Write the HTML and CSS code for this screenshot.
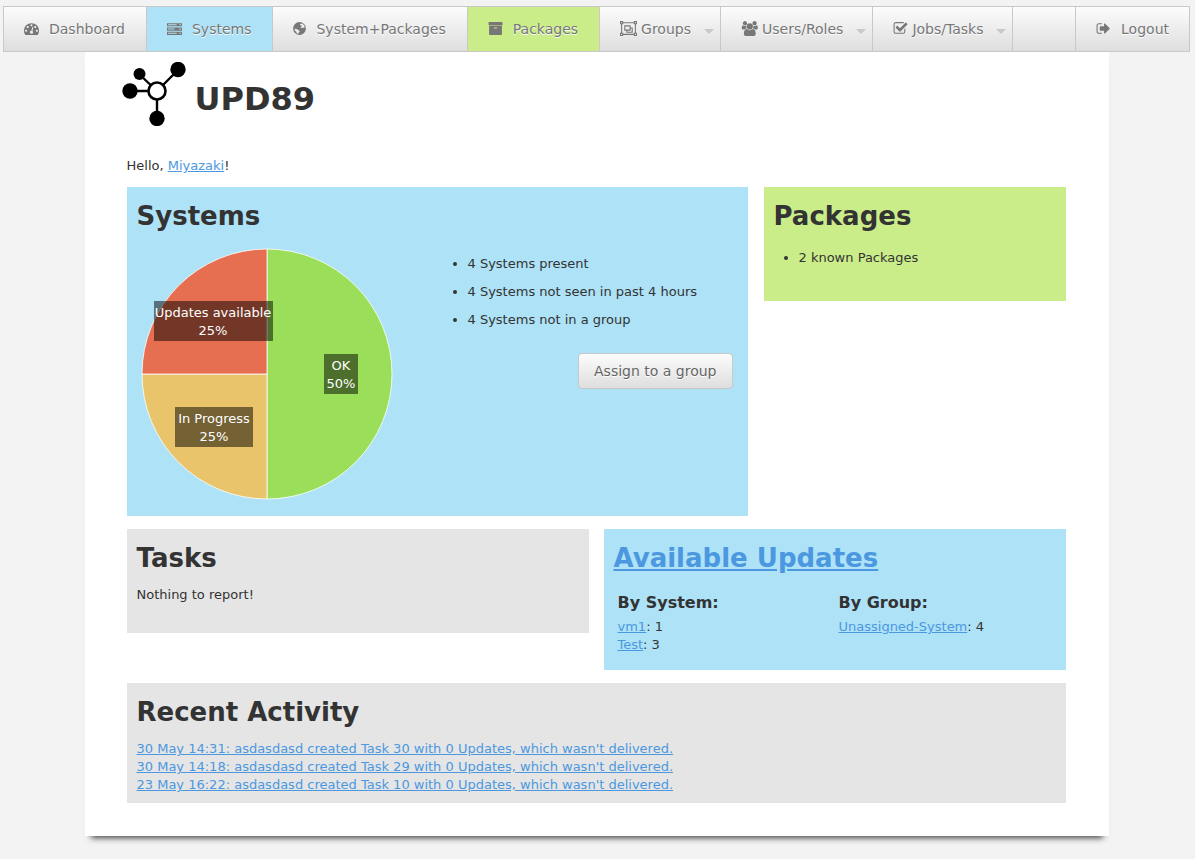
FILE: index.html
```html
<!DOCTYPE html>
<html lang="en">
<head>
<meta charset="utf-8">
<title>UPD89</title>
<link rel="stylesheet" href="styles.css">
</head>
<body>
<nav class="nav">
  <a class="nav-item" href="#"><svg class="icon" viewBox="0 0 1792 1792"><path d="M384 1152q0-53-37.5-90.5t-90.5-37.5-90.5 37.5-37.5 90.5 37.5 90.5 90.5 37.5 90.5-37.5 37.5-90.5zm192-448q0-53-37.5-90.5t-90.5-37.5-90.5 37.5-37.5 90.5 37.5 90.5 90.5 37.5 90.5-37.5 37.5-90.5zm428 481l101-382q6-26-7.5-48.5t-38.5-29.5-48 6.5-30 39.5l-101 382q-60 5-107 43.5t-63 98.5q-20 77 20 146t117 89 146-20 89-117q16-60-6-117t-72-91zm660-33q0-53-37.5-90.5t-90.5-37.5-90.5 37.5-37.5 90.5 37.5 90.5 90.5 37.5 90.5-37.5 37.5-90.5zm-640-640q0-53-37.5-90.5t-90.5-37.5-90.5 37.5-37.5 90.5 37.5 90.5 90.5 37.5 90.5-37.5 37.5-90.5zm448 192q0-53-37.5-90.5t-90.5-37.5-90.5 37.5-37.5 90.5 37.5 90.5 90.5 37.5 90.5-37.5 37.5-90.5zm320 448q0 261-141 483-19 29-54 29h-1402q-35 0-54-29-141-221-141-483 0-182 71-348t191-286 286-191 348-71 348 71 286 191 191 286 71 348z"/></svg>Dashboard</a>
  <a class="nav-item nav-item-systems" href="#"><svg class="icon" viewBox="0 0 1792 1792"><path fill-rule="evenodd" d="M0 256h1792v384H0zM128 384v128h1024V384zM1472 384v128h192V384zM0 768h1792v384H0zM128 896v128h768V896zM1472 896v128h192V896zM0 1280h1792v384H0zM128 1408v128h1024v-128zM1472 1408v128h192v-128z"/></svg>Systems</a>
  <a class="nav-item" href="#"><svg class="icon icon-narrow" viewBox="128 0 1536 1792"><path fill-rule="evenodd" d="M896 128a768 768 0 1 0 0 1536 768 768 0 1 0 0-1536zM1090 290l190 80 150 150 90 190-80 130-150-50-110 90-130-60 20-140 120-60-80-110-120 20-30-110zM330 900l130 60 200 20 110 130 140 60-20 150-120 110-30 130-160-60-60-180-130-130-80-150z"/></svg>System+Packages</a>
  <a class="nav-item nav-item-packages" href="#"><svg class="icon" viewBox="0 0 1792 1792"><path d="M1088 832q0-26-19-45t-45-19h-256q-26 0-45 19t-19 45 19 45 45 19h256q26 0 45-19t19-45zm576-192v960q0 26-19 45t-45 19h-1408q-26 0-45-19t-19-45v-960q0-26 19-45t45-19h1408q26 0 45 19t19 45zm64-448v256q0 26-19 45t-45 19h-1536q-26 0-45-19t-19-45v-256q0-26 19-45t45-19h1536q26 0 45 19t19 45z"/></svg>Packages</a>
  <a class="nav-item nav-item-menu" href="#"><svg class="icon icon-wide" viewBox="0 0 2048 1792"><path fill-rule="evenodd" d="M0 0h384v128h1280V0h384v384h-128v1024h128v384h-384v-128H384v128H0v-384h128V384H0zM128 128v128h128V128zM1792 128v128h128V128zM384 256v128H256v1024h128v128h1280v-128h128V384h-128V256zM128 1536v128h128v-128zM1792 1536v128h128v-128zM512 512h768v256h256v640H768v-256H512zM640 640v384h512V640zM1280 896v256H896v128h512V896z"/></svg>Groups</a>
  <a class="nav-item nav-item-menu" href="#"><svg class="icon icon-wide" viewBox="0 0 1984 1792"><path d="M657 896q-162 5-265 128h-134q-82 0-138-40.5t-56-118.5q0-353 124-353 6 0 43.5 21t97.5 42.5 119 21.5q67 0 133-23-5 37-5 66 0 139 81 256zm1071 637q0 120-73 189.5t-194 69.5h-874q-121 0-194-69.5t-73-189.5q0-53 3.5-103.5t14-109 26.5-108.5 43-97.5 62-81 85.5-53.5 111.5-20q10 0 43 21.5t73 48 107 48 135 21.5 135-21.5 107-48 73-48 43-21.5q61 0 111.5 20t85.5 53.5 62 81 43 97.5 26.5 108.5 14 109 3.5 103.5zm-1024-1277q0 106-75 181t-181 75-181-75-75-181 75-181 181-75 181 75 75 181zm704 384q0 159-112.5 271.5t-271.5 112.5-271.5-112.5-112.5-271.5 112.5-271.5 271.5-112.5 271.5 112.5 112.5 271.5zm576 225q0 78-56 118.5t-138 40.5h-134q-103-123-265-128 81-117 81-256 0-29-5-66 66 23 133 23 59 0 119-21.5t97.5-42.5 43.5-21q124 0 124 353zm-128-609q0 106-75 181t-181 75-181-75-75-181 75-181 181-75 181 75 75 181z"/></svg>Users/Roles</a>
  <a class="nav-item nav-item-menu" href="#"><svg class="icon" viewBox="0 0 1792 1792"><path d="M1472 930v318q0 119-84.5 203.5t-203.5 84.5h-832q-119 0-203.5-84.5t-84.5-203.5v-832q0-119 84.5-203.5t203.5-84.5h832q63 0 117 25 15 7 18 23 3 17-9 29l-49 49q-10 10-23 10-3 0-9-2-23-6-45-6h-832q-66 0-113 47t-47 113v832q0 66 47 113t113 47h832q66 0 113-47t47-113v-254q0-13 9-22l64-64q10-10 23-10 6 0 12 3 20 8 20 29zm231-489l-814 814q-24 24-57 24t-57-24l-430-430q-24-24-24-57t24-57l110-110q24-24 57-24t57 24l263 263 647-647q24-24 57-24t57 24l110 110q24 24 24 57t-24 57z"/></svg>Jobs/Tasks</a>
  <span class="nav-space"></span>
  <a class="nav-item" href="#"><svg class="icon" viewBox="0 0 1792 1792"><path d="M704 1440q0 4 1 20t.5 26.5-3 23.5-10 19.5-20.5 6.5h-320q-119 0-203.5-84.5t-84.5-203.5v-704q0-119 84.5-203.5t203.5-84.5h320q13 0 22.5 9.5t9.5 22.5q0 4 1 20t.5 26.5-3 23.5-10 19.5-20.5 6.5h-320q-66 0-113 47t-47 113v704q0 66 47 113t113 47h312l11.5 1 11.5 3 8 5.5 7 9 2 13.5zm928-544q0 26-19 45l-544 544q-19 19-45 19t-45-19-19-45v-288h-448q-26 0-45-19t-19-45v-384q0-26 19-45t45-19h448v-288q0-26 19-45t45-19 45 19l544 544q19 19 19 45z"/></svg>Logout</a>
</nav>
<main class="page">
  <header class="brand">
    <svg class="logo" viewBox="0 0 64 64"><g stroke="#000" stroke-width="2.4"><path d="M35 29L56 8M35 29L17 12M35 29H8M35 29V57"/></g><circle cx="56" cy="7.500" r="7.700"/><circle cx="17.500" cy="12" r="6"/><circle cx="8" cy="29" r="7.700"/><circle cx="35" cy="56.500" r="7.700"/><circle cx="35" cy="29" r="8.500" fill="#fff" stroke="#000" stroke-width="2.600"/></svg>
    <h1 class="brand-name">UPD89</h1>
  </header>
  <p class="greeting">Hello, <a href="#">Miyazaki</a>!</p>
  <div class="row row-top">
    <section class="box box-blue">
      <h2>Systems</h2>
      <div class="systems">
        <svg class="pie" viewBox="0 0 252 252" role="img" aria-label="System states">
          <g stroke="#fff" stroke-opacity=".8">
            <path fill="#9ade59" d="M126 126V1a125 125 0 0 1 0 250z"/>
            <path fill="#e9c46a" d="M126 126v125a125 125 0 0 1-125-125z"/>
            <path fill="#e76f51" d="M126 126H1A125 125 0 0 1 126 1z"/>
          </g>
          <g class="pie-plate">
            <rect x="13" y="53" width="119" height="40"/>
            <rect x="183" y="106" width="34" height="40"/>
            <rect x="34" y="159" width="78" height="40"/>
          </g>
          <g class="pie-label">
            <text x="72" y="69">Updates available</text><text x="72" y="87">25%</text>
            <text x="200" y="122">OK</text><text x="200" y="140">50%</text>
            <text x="73" y="175">In Progress</text><text x="73" y="193">25%</text>
          </g>
        </svg>
        <div class="systems-info">
          <ul class="facts">
            <li>4 Systems present</li>
            <li>4 Systems not seen in past 4 hours</li>
            <li>4 Systems not in a group</li>
          </ul>
          <button class="button" type="button">Assign to a group</button>
        </div>
      </div>
    </section>
    <section class="box box-green">
      <h2>Packages</h2>
      <ul class="facts facts-packages"><li>2 known Packages</li></ul>
    </section>
  </div>
  <div class="row row-half">
    <section class="box box-gray">
      <h2>Tasks</h2>
      <p class="empty">Nothing to report!</p>
    </section>
    <section class="box box-blue">
      <h2><a href="#">Available Updates</a></h2>
      <div class="updates">
        <div class="updates-group">
          <h3>By System:</h3>
          <div><a href="#">vm1</a>: 1</div>
          <div><a href="#">Test</a>: 3</div>
        </div>
        <div class="updates-group">
          <h3>By Group:</h3>
          <div><a href="#">Unassigned-System</a>: 4</div>
        </div>
      </div>
    </section>
  </div>
  <section class="box box-gray">
    <h2>Recent Activity</h2>
    <div class="activity">
      <a href="#">30 May 14:31: asdasdasd created Task 30 with 0 Updates, which wasn't delivered.</a>
      <a href="#">30 May 14:18: asdasdasd created Task 29 with 0 Updates, which wasn't delivered.</a>
      <a href="#">23 May 16:22: asdasdasd created Task 10 with 0 Updates, which wasn't delivered.</a>
    </div>
  </section>
</main>
</body>
</html>
```
FILE: styles.css
```css
* { box-sizing: border-box; }

body {
  margin: 0;
  padding: 6px 5px 22px 3px;
  background: #f3f3f3;
  color: #333;
  font: 13px/18px Verdana, "DejaVu Sans", sans-serif;
}

h1, h2, h3, p, ul { margin: 0; }
a { color: #4b98e0; }

.nav {
  display: flex;
  height: 46px;
  border: 1px solid #c8c8c8;
  background: linear-gradient(#fcfcfc, #dedede);
}

.nav-item {
  display: flex;
  align-items: center;
  padding: 0 21px 0 20px;
  border-right: 1px solid #c8c8c8;
  color: #777;
  font-size: 14px;
  text-decoration: none;
  text-shadow: 0 1px 0 #fff;
  white-space: nowrap;
}

.nav-item:last-child {
  padding-right: 20px;
  border-right: 0;
}

.nav-item-systems { background: #aee2f7; }
.nav-item-packages { background: #caed8a; }

.nav-item-menu::after {
  content: "";
  margin: 4px -15px 0 13px;
  border: 5px solid transparent;
  border-top-color: #c8c8c8;
  border-bottom-width: 0;
}

.nav-space {
  flex: 1;
  border-right: 1px solid #c8c8c8;
}

.icon {
  width: 15px;
  height: 15px;
  margin: 0 10px 2px 0;
  fill: currentColor;
}

.icon-narrow { width: 13px; }
.icon-wide { width: 17px; }
.nav-item-menu .icon { margin-right: 4px; }

.page {
  max-width: 1024px;
  margin: 0 auto;
  padding: 10px 43px 33px 42px;
  background: #fff;
  box-shadow: 0 8px 6px -6px #444;
}

.brand {
  display: flex;
  gap: 9px;
  margin-left: -5px;
}

.logo { width: 64px; height: 64px; }

.brand-name {
  padding-top: 17px;
  font-size: 32px;
  line-height: 40px;
}

.greeting { margin: 31px 0 12px; }

.row {
  display: grid;
  align-items: start;
  margin-bottom: 13px;
}

.row-top {
  grid-template-columns: 621fr 302fr;
  gap: 16px;
}

.row-half {
  grid-template-columns: 1fr 1fr;
  gap: 15px;
}

.box { padding: 11px 10px 9px; }
.box-blue { background: #aee2f7; }
.box-green { background: #caed8a; }
.box-gray { background: #e5e5e5; }

.box h2 {
  font-size: 26px;
  line-height: 36px;
}

.box h3 {
  margin-bottom: 6px;
  font-size: 16px;
  line-height: 18px;
}

.systems {
  display: flex;
  justify-content: space-between;
  padding: 14px 5px 7px 4px;
}

.pie { width: 252px; height: 252px; }
.pie-plate { fill: #000; fill-opacity: .5; }

.pie-label {
  fill: #fff;
  font-size: 13px;
  text-anchor: middle;
}

.systems-info {
  display: flex;
  flex-direction: column;
  flex: 0 1 290px;
  padding-top: 7px;
}

.facts {
  display: grid;
  gap: 10px;
  padding-left: 25px;
}

.facts-packages { padding-top: 15px; padding-bottom: 25px; }

.button {
  align-self: flex-end;
  margin-top: 24px;
  padding: 8px 15px;
  border: 1px solid #c8c8c8;
  border-radius: 4px;
  background: linear-gradient(#fcfcfc, #dedede);
  color: #666;
  font: inherit;
  font-size: 14px;
  text-shadow: 0 1px 0 #fff;
}

.empty { padding: 10px 0 20px; }

.updates {
  display: grid;
  grid-template-columns: 1fr 1fr;
  padding: 18px 0 7px;
}

.updates-group { padding-left: 4px; }

.activity {
  display: flex;
  flex-direction: column;
  align-items: flex-start;
  padding-top: 10px;
}
```
